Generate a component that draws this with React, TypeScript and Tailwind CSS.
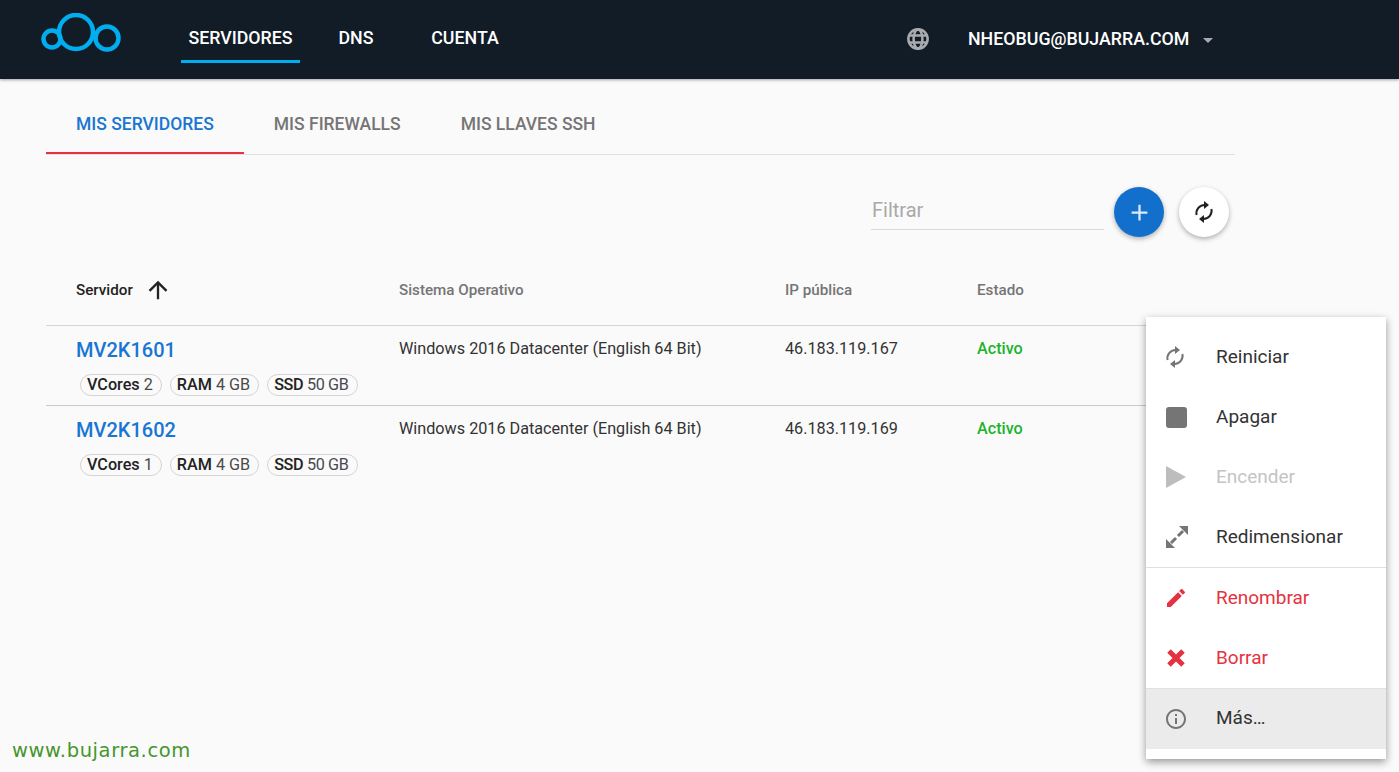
const Sync = ({ className }: { className?: string }) => (
  <svg viewBox="0 0 24 24" className={className} fill="none" stroke="currentColor" strokeWidth="2">
    <path d="M4.6 15A8.2 8.2 0 0 1 12.5 5" />
    <path d="M19.4 9A8.2 8.2 0 0 1 11.5 19" />
    <path d="M12 1l5 4-5 4z" fill="currentColor" stroke="none" />
    <path d="M12 15l-5 4 5 4z" fill="currentColor" stroke="none" />
  </svg>
);

const Logo = () => (
  <svg width="82" height="53" viewBox="0 0 82 53" fill="none" stroke="#00aeef" strokeWidth="4.5">
    <circle cx="11" cy="26" r="8.5" />
    <circle cx="35" cy="19" r="17" />
    <circle cx="66" cy="25" r="11.5" />
  </svg>
);

const Chip = ({ name, value, tight }: { name: string; value: string; tight?: boolean }) => (
  <span className={`h-[22px] rounded-full border border-[#d4d4d4] pr-[8px] pl-[6px] text-[16.2px] leading-[20px] text-[#4a4a4a] whitespace-nowrap ${tight ? "tracking-[-0.35px]" : ""}`}>
    <span className="font-medium text-[#222]">{name}</span> {value}
  </span>
);

const Row = ({ name, ip, vcores, line }: { name: string; ip: string; vcores: string; line: string }) => (
  <div className={`grid h-20 grid-cols-[323px_386px_192px_1fr] pl-[30px] text-[16.2px] text-[#333] ${line}`}>
    <div>
      <div className="mt-[11px] text-[20px] leading-[26px] font-medium text-[#1976d2]">{name}</div>
      <div className="mt-[11px] ml-[4px] flex gap-[8px]">
        <Chip name="VCores" value={vcores} />
        <Chip name="RAM" value="4 GB" />
        <Chip name="SSD" value="50 GB" tight />
      </div>
    </div>
    <div className="mt-[13px] leading-[20px]">Windows 2016 Datacenter (English 64 Bit)</div>
    <div className="mt-[13px] leading-[20px]">{ip}</div>
    <div className="mt-[13px] leading-[20px] font-medium text-[#1db32b]">Activo</div>
  </div>
);

const MenuItem = ({ icon, label, className, labelClass }: { icon: React.ReactNode; label: string; className: string; labelClass?: string }) => (
  <div className={`flex h-[60px] items-center pl-[20px] text-[19px] ${className}`}>
    <span className="flex w-[50px] items-center">{icon}</span>
    <span className={labelClass}>{label}</span>
  </div>
);

export default function App() {
  return (
    <div className="relative h-[772px] w-[1399px] overflow-hidden bg-[#fafafa] font-['Roboto',sans-serif]">
      <header className="flex h-[79px] items-center bg-[#121c27] pl-[41px] shadow-[0_1px_3px_rgba(0,0,0,0.35)]">
        <Logo />
        <nav className="ml-[58px] flex h-full text-[17.8px] font-medium text-white">
          <div className="flex h-[63px] w-[119px] items-center justify-center border-b-[3px] border-[#00aeef] pt-[17px]">SERVIDORES</div>
          <div className="flex h-[63px] w-[112px] items-center justify-center pt-[13px]">DNS</div>
          <div className="flex h-[63px] w-[105px] items-center justify-center pt-[13px] pl-[1px]">CUENTA</div>
        </nav>
        <svg className="mb-[1px] ml-[390px] text-[#a8abaf]" width="22" height="22" viewBox="0 0 24 24" fill="none" stroke="currentColor" strokeWidth="2.8">
          <circle cx="12" cy="12" r="10.5" />
          <ellipse cx="12" cy="12" rx="4.8" ry="10.5" />
          <path d="M2 8.2h20M2 15.8h20" />
        </svg>
        <span className="ml-[39px] text-[17.8px] font-medium text-white">NHEOBUG@BUJARRA.COM</span>
        <span className="ml-[14px] mt-[2px] h-0 w-0 border-x-[5px] border-t-[5px] border-x-transparent border-t-[#a8abaf]" />
      </header>

      <main className="ml-[46px] w-[1189px]">
        <div className="mt-[15px] flex h-[61px] border-b border-[#e0e0e0] text-[17.5px] font-medium text-[#757575]">
          <div className="flex items-center border-b-2 border-[#e53240] px-[30px] pt-[2px] text-[#1976d2]">MIS SERVIDORES</div>
          <div className="flex items-center px-[30px]">MIS FIREWALLS</div>
          <div className="flex items-center px-[30px]">MIS LLAVES SSH</div>
        </div>

        <div className="mt-[32px] flex items-start justify-end pr-[6px]">
          <div className="mr-[10px] h-[43px] w-[233px] border-b border-[#d8d8d8] pt-[11px] pl-[1px] text-[20px] leading-[24px] text-[#a9a9a9]">Filtrar</div>
          <div className="flex size-[50px] items-center justify-center rounded-full bg-[#1270cc] shadow-[0_2px_5px_rgba(0,0,0,0.3)]">
            <svg width="27" height="27" viewBox="0 0 24 24" fill="currentColor" className="text-[#dbe9f7]">
              <path d="M19 13h-6v6h-2v-6H5v-2h6V5h2v6h6v2z" />
            </svg>
          </div>
          <div className="ml-[15px] flex size-[50px] items-center justify-center rounded-full bg-white shadow-[0_2px_5px_rgba(0,0,0,0.3)]">
            <Sync className="size-6 text-[#222]" />
          </div>
        </div>

        <div className="mt-[25px] grid h-[64px] grid-cols-[323px_386px_192px_1fr] items-start border-b border-[#d4d4d4] pt-[14px] pl-[30px] text-[15.2px] leading-[20px] font-medium text-[#757575]">
          <div className="flex items-center text-[#222]">
            Servidor
            <svg className="ml-[11px] text-[#222]" width="28" height="28" viewBox="0 0 24 24" fill="currentColor">
              <path d="M4 12l1.41 1.41L11 7.83V20h2V7.83l5.58 5.59L20 12l-8-8-8 8z" />
            </svg>
          </div>
          <div className="mt-[4px]">Sistema Operativo</div>
          <div className="mt-[4px]">IP pública</div>
          <div className="mt-[4px]">Estado</div>
        </div>
        <Row name="MV2K1601" ip="46.183.119.167" vcores="2" line="border-b border-[#c9c9c9]" />
        <Row name="MV2K1602" ip="46.183.119.169" vcores="1" line="" />
      </main>

      <div className="absolute top-[317px] left-[1146px] w-[240px] bg-white py-[10px] shadow-[0_3px_8px_rgba(0,0,0,0.4)]">
        <MenuItem className="text-[#333]" label="Reiniciar" icon={<Sync className="-ml-[3px] size-6 text-[#757575]" />} />
        <MenuItem className="text-[#333]" label="Apagar" icon={<span className="size-[21px] rounded-[3px] bg-[#757575]" />} />
        <MenuItem className="text-[#c4c4c4]" label="Encender" icon={
          <svg width="20" height="22" viewBox="0 0 20 22" fill="#bdbdbd"><path d="M0 0l20 11L0 22z" /></svg>
        } />
        <MenuItem className="text-[#333]" label="Redimensionar" icon={
          <svg width="22" height="22" viewBox="0 0 22 22" fill="#757575" stroke="#757575">
            <path d="M13 0h9v9z" stroke="none" />
            <path d="M0 13v9h9z" stroke="none" />
            <path d="M17 5l-5 5M5 17l5-5" strokeWidth="3" />
          </svg>
        } />
        <div className="h-px bg-[#e0e0e0]" />
        <MenuItem className="text-[#e53240]" label="Renombrar" icon={
          <svg width="24" height="24" viewBox="0 0 24 24" fill="#e53240" className="-ml-[2px]">
            <path d="M3 17.25V21h3.75L17.81 9.94l-3.75-3.75L3 17.25zM20.71 7.04a1 1 0 0 0 0-1.41l-2.34-2.34a1 1 0 0 0-1.41 0l-1.83 1.83 3.75 3.75 1.83-1.83z" />
          </svg>
        } />
        <MenuItem className="text-[#e53240]" label="Borrar" icon={
          <svg width="18" height="18" viewBox="0 0 18 18" fill="none" stroke="#e53240" strokeWidth="5" className="ml-[1px]">
            <path d="M2 2l14 14M16 2L2 16" />
          </svg>
        } />
        <div className="h-px bg-[#e0e0e0]" />
        <MenuItem className="bg-[#ebebeb] text-[#333]" labelClass="pb-[2px]" label="Más…" icon={
          <svg width="24" height="24" viewBox="0 0 24 24" fill="#757575" className="-ml-[2px]">
            <path d="M11 7h2v2h-2zm0 4h2v6h-2zm1-9C6.48 2 2 6.48 2 12s4.48 10 10 10 10-4.48 10-10S17.52 2 12 2zm0 18c-4.41 0-8-3.59-8-8s3.59-8 8-8 8 3.59 8 8-3.59 8-8 8z" />
          </svg>
        } />
      </div>

      <div className="absolute top-[739px] left-[12px] font-['DejaVu_Sans',sans-serif] text-[19.5px] leading-[24px] tracking-[0.6px] text-[#45962d]">www.bujarra.com</div>
    </div>
  );
}
